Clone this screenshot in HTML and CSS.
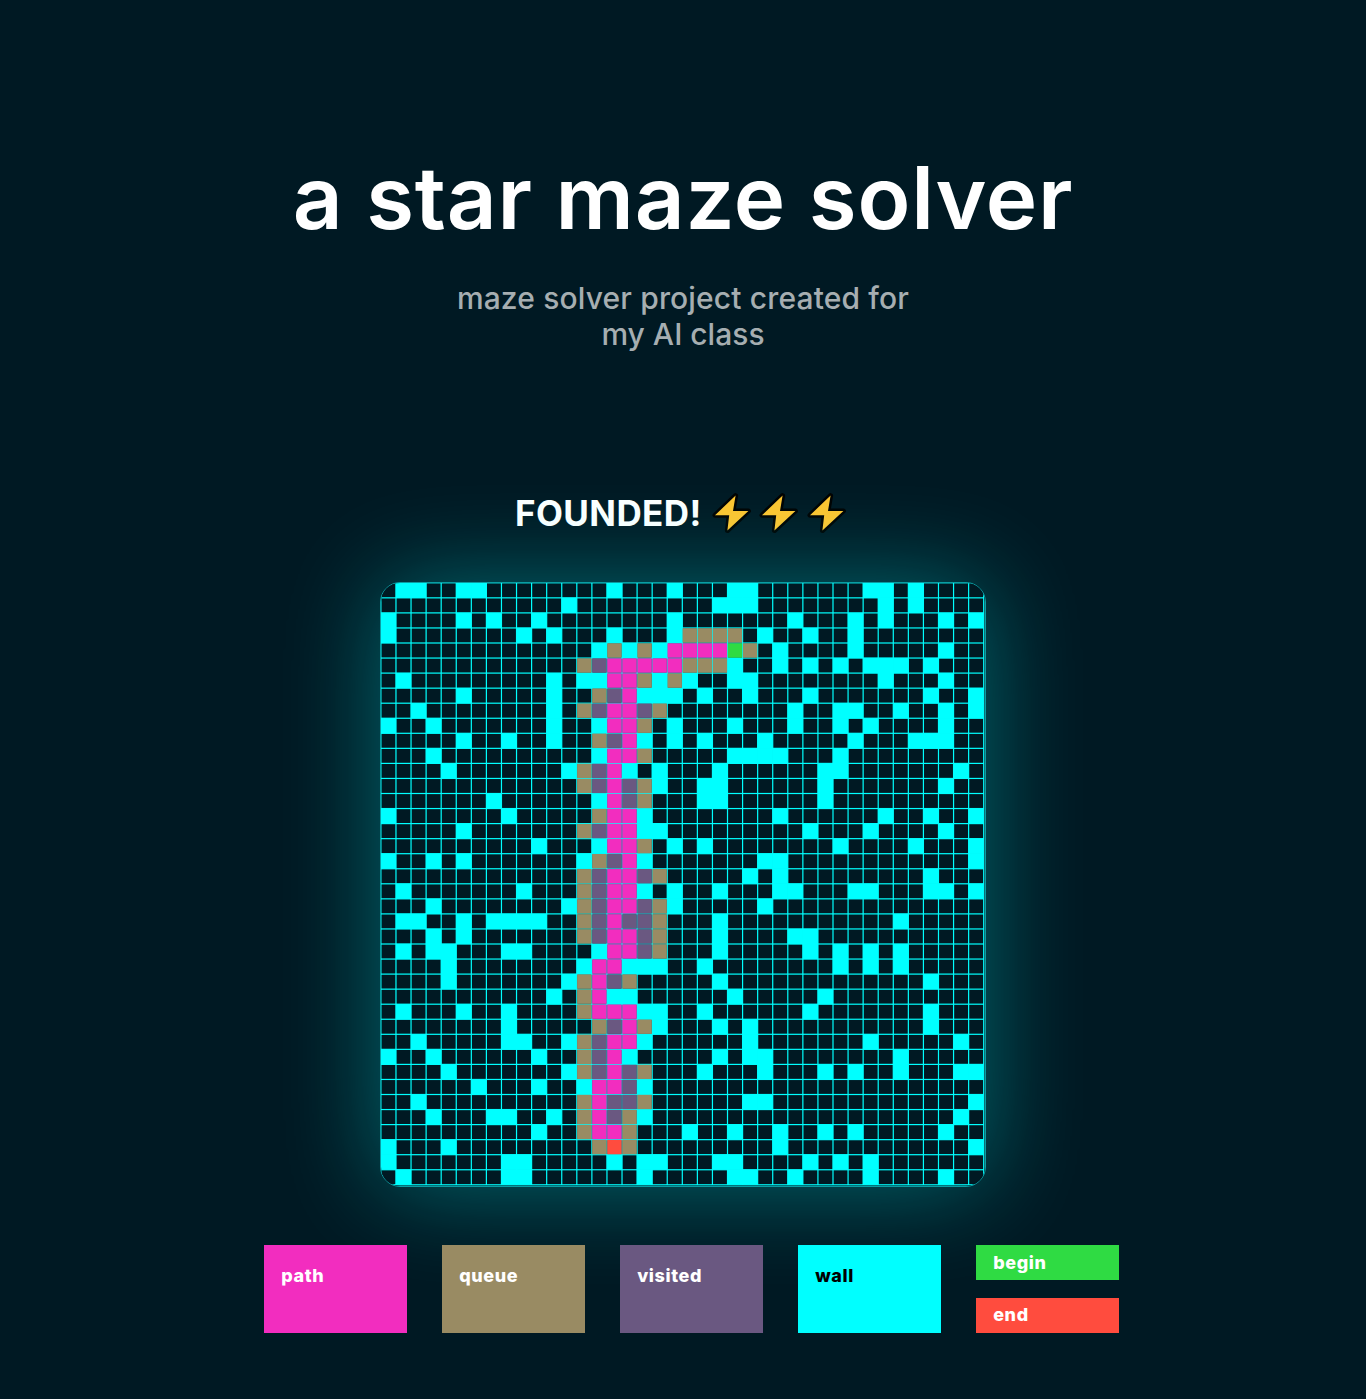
FILE: index.html
```html
<!DOCTYPE html>
<html lang="en">
<head>
<meta charset="utf-8">
<title>a star maze solver</title>
<link rel="stylesheet" href="styles.css">
</head>
<body>
<header class="intro">
  <h1 class="title">a star maze solver</h1>
  <p class="subtitle"><span class="line line-one">maze solver project created for</span><span class="line line-two">my AI class</span></p>
</header>
<main class="solver">
  <h2 class="status">
    <span class="status-text">FOUNDED!</span>
    <svg class="bolt" viewBox="0 0 38 42"><path d="M22.6 2.6 2 22.2h14.2l-1.8 15.4L35.4 18H20z"/></svg>
    <svg class="bolt" viewBox="0 0 38 42"><path d="M22.6 2.6 2 22.2h14.2l-1.8 15.4L35.4 18H20z"/></svg>
    <svg class="bolt" viewBox="0 0 38 42"><path d="M22.6 2.6 2 22.2h14.2l-1.8 15.4L35.4 18H20z"/></svg>
  </h2>
  <div class="board"><canvas class="maze" id="maze" width="604" height="603"></canvas></div>
  <div class="legend">
    <div class="key path">path</div>
    <div class="key queue">queue</div>
    <div class="key visited">visited</div>
    <div class="key wall">wall</div>
    <div class="ends">
      <div class="key small begin">begin</div>
      <div class="key small end">end</div>
    </div>
  </div>
</main>
<script src="maze.js"></script>
</body>
</html>
```
FILE: styles.css
```css
* { box-sizing: border-box; }
body {
  margin: 0;
  min-height: 1399px;
  background: #001923;
  color: #fff;
  font-family: Inter, "Liberation Sans", sans-serif;
  overflow: hidden;
}
.intro { padding-top: 146px; text-align: center; }
.title {
  margin: 0;
  font-size: 87px;
  line-height: 104px;
  font-weight: 600;
  letter-spacing: 0.8px;
  white-space: nowrap;
}
.subtitle {
  margin: 30px 0 0;
  font-size: 30px;
  line-height: 36px;
  font-weight: 500;
  color: #a6aeb1;
}
.line { display: block; white-space: nowrap; }
.line-one { letter-spacing: 0.15px; }
.solver { display: flex; flex-direction: column; align-items: center; padding-top: 136px; }
.status {
  display: flex;
  align-items: center;
  width: 336px;
  height: 50px;
  margin: 0 0 44px;
  font-size: 35px;
  line-height: 50px;
  font-weight: 700;
  letter-spacing: 0.4px;
}
.status-text { flex: none; width: 198px; white-space: nowrap; }
.bolt { width: 38px; height: 42px; margin: 2px 9.3px 0 0; flex: none; overflow: visible; }
.bolt path {
  fill: #ffc52f;
  stroke: #000;
  stroke-width: 5;
  stroke-linejoin: round;
  paint-order: stroke;
}
.board {
  width: 606px;
  height: 605px;
  border: 1px solid #0b9da3;
  border-radius: 20px;
  overflow: hidden;
  box-shadow: 0 0 100px rgba(0, 255, 255, 0.35);
}
.maze { display: block; }
.legend {
  display: flex;
  gap: 35px;
  margin: 58px 0 0 17.4px;
  font-size: 18px;
  line-height: 26px;
  font-weight: 800;
  letter-spacing: 0.6px;
}
.key { width: 143px; height: 88px; padding: 18px 17px; }
.ends { display: flex; flex-direction: column; gap: 18px; }
.small { height: 35px; padding-top: 5px; }
.path { background: #f22dbf; }
.queue { background: #998b63; }
.visited { background: #6a5881; }
.wall { background: #00ffff; color: #000; }
.begin { background: #2fdb43; }
.end { padding-top: 4px; background: #ff4c3e; }
```
FILE: maze.js
```js
// Each row lists its non-empty cells: a letter for the kind, then a column or a range.
const rows = [
  "w1-2 w5-6 w15 w19 w23-24 w32-33 w35",
  "w12 w22-24 w33 w35",
  "w0 w5 w7 w10 w19 w27 w31 w33 w37 w39",
  "w0 w9 w11 w15 w19 q20-23 w25 w28 w31",
  "w14 q15 w16 q17 w18 p19-22 b23 q24 w26 w31 w37",
  "q13 v14 p15-19 q20-22 w23 w26 w28 w30 w32-34 w36",
  "w1 w11 w13-14 p15-16 q17 w18 q19 w20 w23-24 w33 w37",
  "w5 w11 q14 v15 p16 w17-19 w21 w24 w28 w36 w39",
  "w2 w11 q13 v14 p15-16 v17 q18 w27 w30-31 w34 w37 w39",
  "w0 w3 w11 w14 p15-16 q17 w19 w23 w27 w30 w32 w37",
  "w5 w8 w11 q14 v15 p16 w17 w19 w21 w25 w31 w35-37",
  "w3 w14 p15-16 q17 w23-26 w30",
  "w4 w12 q13 v14 p15 w16 w18 w22 w29-30 w38",
  "q13 v14 p15 v16 q17 w18 w21-22 w29 w37",
  "w7 w14 p15 v16 q17 w21-22 w29",
  "w0 w8 q14 p15-16 w17 w26 w33 w36 w39",
  "w5 q13 v14 p15-16 w17-18 w28 w32 w37",
  "w10 w14 p15-16 q17 w19 w21 w30 w35 w39",
  "w0 w3 w5 w13 q14 v15 p16 w17 w25-26 w39",
  "q13 v14 p15-16 v17 q18 w24 w26 w36",
  "w1 w9 q13 v14 p15-16 w17 w19 w22 w26-27 w31-32 w36-37 w39",
  "w3 w12 q13 v14 p15-16 v17 q18 w19 w25",
  "w1-2 w5 w7-10 q13 v14 p15 v16-17 q18 w22 w34",
  "w3 w5 q13 v14 p15-16 v17 q18 w22 w27-28",
  "w1 w3-4 w8-9 w14 p15-16 v17 q18 w22 w28 w30 w32 w34",
  "w4 w13 p14-15 w16-18 w21 w30 w32 w34",
  "w4 w12 q13 p14 v15 q16 w22 w36",
  "w11 q13 p14 w15-16 w23 w29",
  "w1 w5 w8 q13 p14-16 w17-18 w21 w28 w36",
  "w8 q14 v15 p16 q17 w18 w22 w24 w36",
  "w2 w8-9 w12 q13 v14 p15-16 w17 w24 w32 w38",
  "w0 w3 w10 q13 v14 p15 w16 w22 w24-25 w34",
  "w4 w12 q13 v14 p15 v16 q17 w21 w25 w29 w31 w34 w38-39",
  "w6 w10 w13 p14-15 v16 w17",
  "w2 q13 p14 v15-16 q17 w24-25 w39",
  "w3 w7-8 w11 q13 p14 v15 q16 w17 w38",
  "w10 q13 p14-15 q16 w20 w23 w26 w29 w31 w37",
  "w0 w4 q14 e15 q16 w26 w39",
  "w0 w8-9 w15 w17-18 w22-23 w28 w30 w32",
  "w1 w8-9 w17 w23-24 w27 w32 w37"
];
const colors = { w: "#00ffff", p: "#f22dbf", q: "#998b63", v: "#6a5881", b: "#2fdb43", e: "#ff4c3e" };
const pitchX = 15.07;
const pitchY = 15.05;
const ctx = document.getElementById("maze").getContext("2d");

ctx.fillStyle = "#001923";
ctx.fillRect(0, 0, 604, 603);
ctx.fillStyle = colors.w;
for (let i = 0; i <= 40; i++) {
  ctx.fillRect(i * pitchX - 0.7, 0, 1.2, 602);
  ctx.fillRect(0, i * pitchY - 0.8, 603, 1.2);
}

function paint(filter) {
  rows.forEach((row, y) => {
    for (const run of row.split(" ")) {
      if (filter !== (run[0] === "w")) continue;
      const [from, to = from] = run.slice(1).split("-").map(Number);
      ctx.fillStyle = colors[run[0]];
      for (let x = from; x <= to; x++) {
        const inset = filter ? 0 : 0.5;
        ctx.fillRect(x * pitchX - 0.3 + inset, y * pitchY - 0.4 + inset, pitchX + 0.3 - 2 * inset, pitchY + 0.3 - 2 * inset);
      }
    }
  });
}
paint(true);
paint(false);
ctx.fillStyle = "#0b6f76";
ctx.fillRect(603, 0, 1, 603);
```
